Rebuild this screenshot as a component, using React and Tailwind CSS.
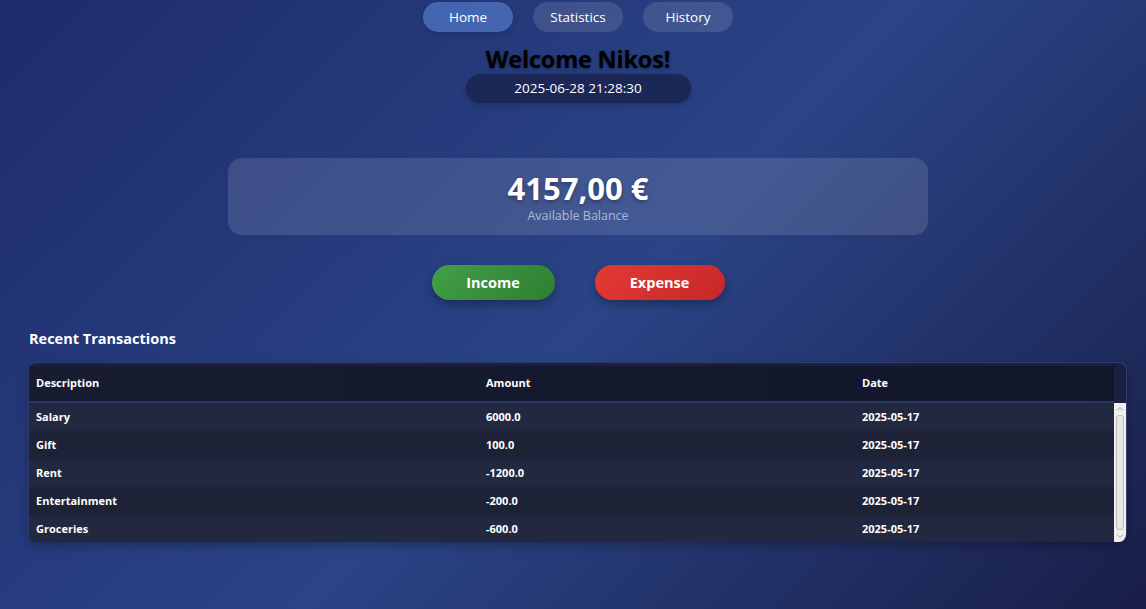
import React from "react";

const rows = [
  ["Salary", "6000.0", "2025-05-17"],
  ["Gift", "100.0", "2025-05-17"],
  ["Rent", "-1200.0", "2025-05-17"],
  ["Entertainment", "-200.0", "2025-05-17"],
  ["Groceries", "-600.0", "2025-05-17"],
];

function Scrollbar() {
  return (
    <div className="w-[12px] bg-[#f0f0f0] flex flex-col items-center shrink-0">
      <svg width="12" height="12" viewBox="0 0 12 12" className="shrink-0">
        <path d="M3 7.5 L6 4.5 L9 7.5" fill="none" stroke="#a0a0a0" strokeWidth="1" />
      </svg>
      <div className="flex-1 w-[8px] rounded-[3px] border border-[#bcbcbc] bg-[#e6e6e6]" />
      <svg width="12" height="12" viewBox="0 0 12 12" className="shrink-0">
        <path d="M3 4.5 L6 7.5 L9 4.5" fill="none" stroke="#a0a0a0" strokeWidth="1" />
      </svg>
    </div>
  );
}

export default function App() {
  return (
    <div
      className="w-[1146px] h-[609px] overflow-hidden text-white bg-[linear-gradient(135deg,#1e2b6c_0%,#2a4486_52%,#191e48_100%)]"
      style={{ fontFamily: '"Open Sans", "Noto Sans", sans-serif' }}
    >
      <div className="flex flex-col items-center pl-[10px]">
        <nav className="flex gap-[20px] pt-[2px]">
          <button className="w-[90px] h-[30px] rounded-full bg-[#4466b0] text-[13.5px] text-white shadow-[0_2px_6px_rgba(0,0,0,0.15)]">
            Home
          </button>
          <button className="w-[90px] h-[30px] rounded-full bg-[rgba(255,255,255,0.12)] text-[13.5px] text-white">
            Statistics
          </button>
          <button className="w-[90px] h-[30px] rounded-full bg-[rgba(255,255,255,0.12)] text-[13.5px] text-white">
            History
          </button>
        </nav>
        <h1 className="mt-[12px] text-[23.5px] leading-[30px] font-bold text-black [text-shadow:0_1px_3px_rgba(0,0,0,0.4)] tracking-[-0.2px]">
          Welcome Nikos!
        </h1>
        <div className="w-[225px] h-[29px] rounded-full bg-[#1b2756] flex items-center justify-center text-[13.5px] shadow-[0_2px_6px_rgba(0,0,0,0.2)]">
          2025-06-28 21:28:30
        </div>
        <div className="mt-[55px] w-[700px] h-[77px] rounded-[14px] bg-[rgba(255,255,255,0.12)] flex flex-col items-center pt-[11px]">
          <div className="text-[31px] leading-[38px] font-bold [text-shadow:0_2px_4px_rgba(0,0,0,0.35)]">
            4157,00 €
          </div>
          <div className="text-[12.5px] leading-[16px] text-[#aeb7d3] mt-[1px]">Available Balance</div>
        </div>
        <div className="mt-[30px] flex gap-[40px]">
          <button className="w-[123px] h-[35px] rounded-full bg-[linear-gradient(135deg,#43a047,#2e7d32)] text-[14.5px] font-bold text-white shadow-[0_4px_8px_rgba(0,0,0,0.3)]">
            Income
          </button>
          <button className="w-[130px] h-[35px] rounded-full bg-[linear-gradient(135deg,#e53935,#c62828)] text-[14.5px] font-bold text-white shadow-[0_4px_8px_rgba(0,0,0,0.3)]">
            Expense
          </button>
        </div>
      </div>
      <div className="px-[28px] mt-[29px]">
        <h2 className="pl-[1px] text-[14.5px] leading-[20px] font-bold">Recent Transactions</h2>
        <div className="mt-[13px] w-[1099px] rounded-[8px] border-t border-x border-[#2f3d6e] pt-[3px] bg-[#1a2040] shadow-[0_4px_10px_rgba(0,0,0,0.25)] overflow-hidden">
          <div className="flex h-[37px] items-center bg-[linear-gradient(90deg,#171c30,#12162a)] mr-[12px] border-b-[2px] border-[#2b3766] text-[11px] font-bold">
            <div className="w-[450px] pl-[7px]">Description</div>
            <div className="w-[376px] pl-[7px]">Amount</div>
            <div className="pl-[7px]">Date</div>
          </div>
          <div className="flex h-[139px]">
            <div className="flex-1 flex flex-col bg-[#1e2338]">
              {rows.map((r, i) => (
                <div
                  key={r[0]}
                  className={
                    "flex h-[28px] shrink-0 items-center text-[11px] font-bold " +
                    (i % 2 === 0 ? "bg-[#222840]" : "bg-[#1d2237]")
                  }
                >
                  <div className="w-[450px] pl-[7px]">{r[0]}</div>
                  <div className="w-[376px] pl-[7px]">{r[1]}</div>
                  <div className="pl-[7px]">{r[2]}</div>
                </div>
              ))}
            </div>
            <Scrollbar />
          </div>
        </div>
      </div>
    </div>
  );
}
